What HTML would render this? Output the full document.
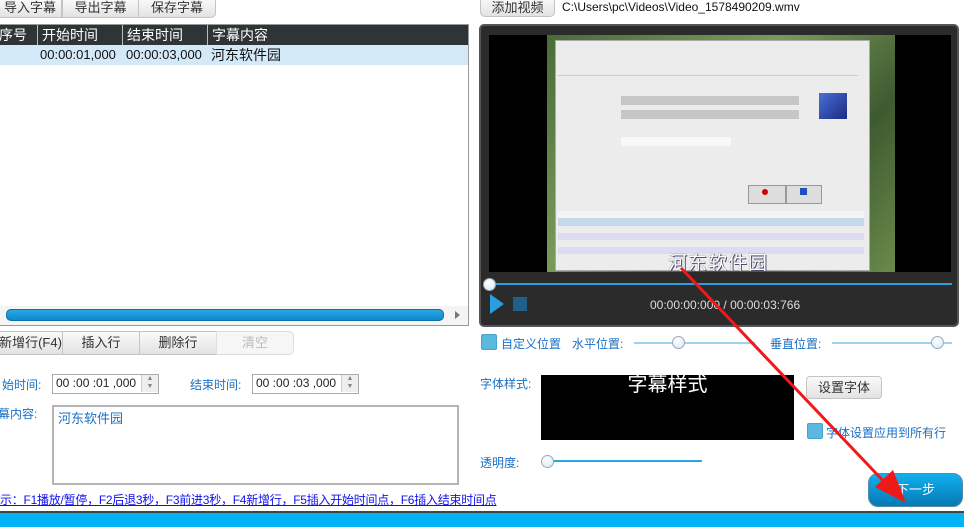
<!DOCTYPE html>
<html><head><meta charset="utf-8"><style>
*{margin:0;padding:0;box-sizing:border-box}
body{width:964px;height:527px;overflow:hidden;background:#fff;position:relative;font-family:"Liberation Sans","Noto Sans CJK SC",sans-serif;font-size:13px;color:#222}
.a{position:absolute}
.btn{position:absolute;background:linear-gradient(#fafafa,#e2e2e2);border:1px solid #c4c4c4;color:#333;text-align:center;font-size:13px}
.lbl{position:absolute;color:#1a6fc4;font-size:12px}
.th{position:absolute;top:25px;height:20px;color:#fff;font-size:14px;line-height:20px;border-left:1px solid #bbb;padding-left:4px}
.td{position:absolute;top:45px;height:20px;line-height:20px;font-size:13px;color:#111}
.inp{position:absolute;border:1px solid #aaa;background:#fff;font-size:12px;line-height:17px;padding-left:3px}
.spin{position:absolute;right:0;top:0;width:17px;height:17px;background:#eee;border-left:1px solid #ccc;font-size:7px;line-height:8px;color:#888;text-align:center}
.sl{position:absolute;height:2px;background:#9dd3ef}
.knob{position:absolute;width:13px;height:13px;border-radius:50%;background:radial-gradient(circle at 40% 35%,#fff,#d4e6f2);border:1px solid #9ab}
.cb{position:absolute;width:16px;height:16px;background:#5bb8e0;border:1px solid #4aa3cc;border-radius:2px}
</style></head><body>
<div class="btn" style="left:-2px;top:-2px;width:64px;height:20px;line-height:18px;border-radius:0">导入字幕</div>
<div class="btn" style="left:62px;top:-2px;width:77px;height:20px;line-height:18px">导出字幕</div>
<div class="btn" style="left:138px;top:-2px;width:78px;height:20px;line-height:18px;border-radius:0 0 5px 0">保存字幕</div>
<div class="a" style="left:0;top:24px;width:469px;height:302px;border:1px solid #999;border-left:none"></div>
<div class="a" style="left:0;top:25px;width:468px;height:20px;background:#2f3437"></div>
<div class="th" style="left:-5px;border:none">序号</div>
<div class="th" style="left:37px">开始时间</div>
<div class="th" style="left:122px">结束时间</div>
<div class="th" style="left:207px">字幕内容</div>
<div class="a" style="left:0;top:45px;width:468px;height:20px;background:#d3e9f7"></div>
<div class="td" style="left:40px">00:00:01,000</div>
<div class="td" style="left:126px">00:00:03,000</div>
<div class="td" style="left:211px;font-size:14px">河东软件园</div>
<div class="a" style="left:0;top:306px;width:468px;height:19px;background:#f4f4f4"></div>
<div class="a" style="left:6px;top:309px;width:438px;height:12px;background:linear-gradient(#2aa6e0,#0d8acd);border:1px solid #0b6fa8;border-radius:5px"></div>
<div class="a" style="left:455px;top:311px;width:0;height:0;border-left:5px solid #777;border-top:4px solid transparent;border-bottom:4px solid transparent"></div>
<div class="btn" style="left:-2px;top:331px;width:65px;height:24px;line-height:22px">新增行(F4)</div>
<div class="btn" style="left:62px;top:331px;width:78px;height:24px;line-height:22px">插入行</div>
<div class="btn" style="left:139px;top:331px;width:78px;height:24px;line-height:22px">删除行</div>
<div class="btn" style="left:216px;top:331px;width:78px;height:24px;line-height:22px;color:#bbb;background:#f6f6f6;border-color:#ddd;border-radius:0 5px 5px 0">清空</div>
<div class="lbl" style="left:2px;top:376px">始时间:</div>
<div class="inp" style="left:52px;top:374px;width:107px;height:20px">00 :00 :01 ,000<div class="spin">▲<br>▼</div></div>
<div class="lbl" style="left:190px;top:376px">结束时间:</div>
<div class="inp" style="left:252px;top:374px;width:107px;height:20px">00 :00 :03 ,000<div class="spin">▲<br>▼</div></div>
<div class="lbl" style="left:-2px;top:405px">幕内容:</div>
<div class="a" style="left:52px;top:405px;width:407px;height:80px;border:2px solid #b5b5b5;color:#1a6fc4;padding:1px 4px;font-size:13px">河东软件园</div>
<div class="a" style="left:0;top:491px;color:#1010ee;font-size:12px;letter-spacing:-0.25px;text-decoration:underline;white-space:nowrap">示：F1播放/暂停，F2后退3秒，F3前进3秒，F4新增行，F5插入开始时间点，F6插入结束时间点</div>
<div class="a" style="left:0;top:511px;width:964px;height:2px;background:#444"></div>
<div class="a" style="left:0;top:513px;width:964px;height:14px;background:#00b4f6"></div>
<div class="btn" style="left:480px;top:-3px;width:75px;height:20px;line-height:20px;border-radius:0 0 5px 5px">添加视频</div>
<div class="a" style="left:562px;top:0;font-size:12px;color:#111">C:\Users\pc\Videos\Video_1578490209.wmv</div>
<div class="a" style="left:479px;top:24px;width:480px;height:303px;background:#2b2b2b;border:2px solid #555;border-radius:5px"></div>
<div class="a" style="left:489px;top:35px;width:462px;height:237px;background:#000"></div>
<div class="a" style="left:547px;top:35px;width:348px;height:237px;background:linear-gradient(135deg,#4a6a3a,#7a9a5a 40%,#3e5a30 70%,#6a8a4a)"></div>
<div class="a" style="left:555px;top:40px;width:315px;height:231px;background:#ececec;border:1px solid #aaa"></div>
<div class="a" style="left:558px;top:68px;width:300px;height:8px;border-bottom:1px solid #ccc"></div>
<div class="a" style="left:621px;top:96px;width:178px;height:9px;background:#c6c6c6"></div>
<div class="a" style="left:621px;top:110px;width:178px;height:9px;background:#c6c6c6"></div>
<div class="a" style="left:819px;top:93px;width:28px;height:26px;background:linear-gradient(135deg,#4a6fd8,#1a2a80)"></div>
<div class="a" style="left:621px;top:137px;width:110px;height:9px;background:#f8f8f8"></div>
<div class="a" style="left:748px;top:185px;width:38px;height:19px;background:#ddd;border:1px solid #999"></div>
<div class="a" style="left:762px;top:189px;width:6px;height:6px;background:#c00;border-radius:50%"></div>
<div class="a" style="left:786px;top:185px;width:36px;height:19px;background:#ddd;border:1px solid #999"></div>
<div class="a" style="left:800px;top:188px;width:7px;height:7px;background:#2050c0"></div>
<div class="a" style="left:558px;top:211px;width:306px;height:8px;background:#f4f4f4"></div>
<div class="a" style="left:558px;top:218px;width:306px;height:8px;background:#c8d8ec"></div>
<div class="a" style="left:558px;top:233px;width:306px;height:7px;background:#dcdcf0"></div>
<div class="a" style="left:558px;top:247px;width:306px;height:7px;background:#dcdcf0"></div>
<div class="a" style="left:668px;top:248px;font-size:19px;color:#fff;letter-spacing:1px;text-shadow:0 0 1px #335,1px 1px 0 #557">河东软件园</div>
<div class="a" style="left:488px;top:283px;width:464px;height:2px;background:#2a9ee0"></div>
<div class="knob" style="left:483px;top:278px"></div>
<div class="a" style="left:490px;top:294px;width:0;height:0;border-left:14px solid #2a9ee0;border-top:10px solid transparent;border-bottom:10px solid transparent"></div>
<div class="a" style="left:513px;top:297px;width:14px;height:14px;background:#1f5f88"></div>
<div class="a" style="left:650px;top:298px;color:#ddd;font-size:12px">00:00:00:000 / 00:00:03:766</div>
<div class="cb" style="left:481px;top:334px"></div>
<div class="lbl" style="left:501px;top:335px">自定义位置</div>
<div class="lbl" style="left:572px;top:335px">水平位置:</div>
<div class="sl" style="left:634px;top:342px;width:121px"></div>
<div class="knob" style="left:672px;top:336px"></div>
<div class="lbl" style="left:770px;top:335px">垂直位置:</div>
<div class="sl" style="left:832px;top:342px;width:120px"></div>
<div class="knob" style="left:931px;top:336px"></div>
<div class="lbl" style="left:480px;top:375px">字体样式:</div>
<div class="a" style="left:541px;top:375px;width:253px;height:65px;background:#000;color:#fff;font-size:20px;text-align:center;line-height:20px">字幕样式</div>
<div class="btn" style="left:806px;top:376px;width:76px;height:23px;line-height:21px;border-radius:4px">设置字体</div>
<div class="cb" style="left:807px;top:423px"></div>
<div class="lbl" style="left:826px;top:424px">字体设置应用到所有行</div>
<div class="lbl" style="left:480px;top:454px">透明度:</div>
<div class="a" style="left:546px;top:460px;width:156px;height:2px;background:#2aa6e0"></div>
<div class="knob" style="left:541px;top:455px"></div>
<div class="a" style="left:868px;top:473px;width:95px;height:34px;border-radius:10px;background:linear-gradient(#12b0ee,#0579b5);border:1px solid #5a8aa8;color:#fff;text-align:center;line-height:32px;font-size:13px">下一步</div>
<svg class="a" style="left:0;top:0" width="964" height="527"><line x1="681" y1="268" x2="890" y2="488" stroke="#f01818" stroke-width="3"/><polygon points="906,503 875,487 893,470" fill="#f01818"/></svg>
</body></html>
